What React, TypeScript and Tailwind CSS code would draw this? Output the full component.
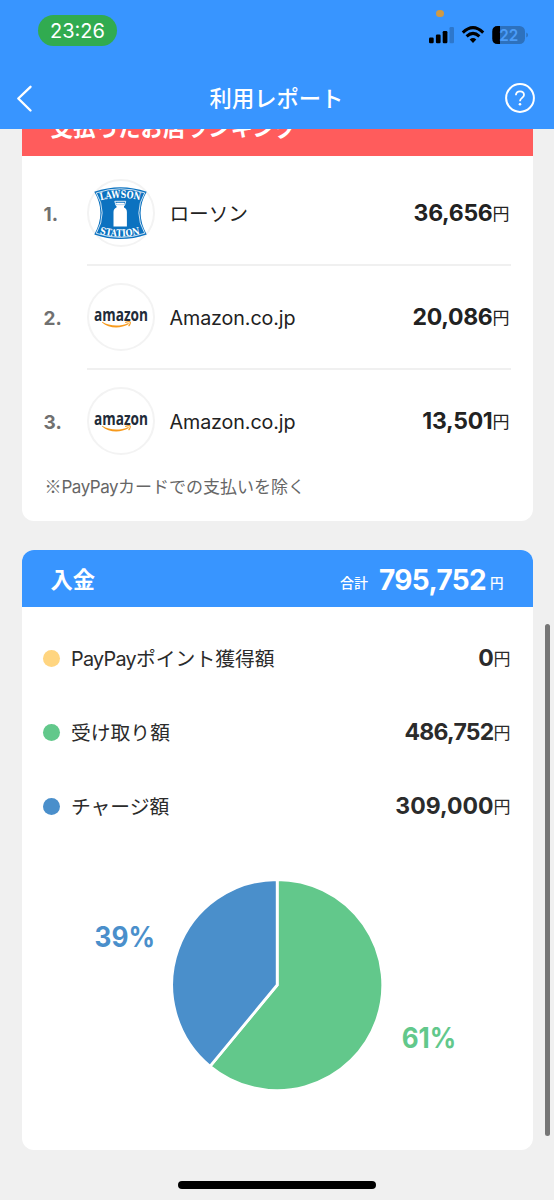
import type { ReactNode } from 'react';

type Shop = {
  rank: number;
  name: string;
  amount: number;
  logo: ReactNode;
};

type Deposit = {
  brand?: string;
  label: string;
  amount: number;
  dot: string;
  tracking: string;
};

const formatAmount = (value: number) => value.toLocaleString('en-US');

function LawsonLogo() {
  return (
    <svg className="shrink-0" width="68" height="68" viewBox="0 0 68 68">
      <path
        d="M7.300 12.800Q33.500 3.500 59.700 12.800Q47.500 33.500 59.700 55.500Q33.500 64.500 7.300 55.500Q19.500 33.500 7.300 12.800Z"
        fill="#0b72c0"
      />
      <path
        d="M9.300 13.900Q33.500 5.700 57.700 13.900Q46 33.500 57.700 54.300Q33.500 62.500 9.300 54.300Q21 33.500 9.300 13.900Z"
        fill="none"
        stroke="#fff"
        strokeWidth="0.8"
      />
      <path id="lawson-top" d="M13.500 21.400Q33.500 16.400 53.500 21.400" fill="none" />
      <path id="lawson-bottom" d="M12.500 54.600Q33.500 60.400 54.500 54.600" fill="none" />
      <g fill="#fff" fontFamily="'DejaVu Serif', serif" fontWeight="700">
        <text fontSize="10.300">
          <textPath href="#lawson-top" textLength="40" lengthAdjust="spacingAndGlyphs">
            LAWSON
          </textPath>
        </text>
        <text fontSize="9.800">
          <textPath href="#lawson-bottom" textLength="41" lengthAdjust="spacingAndGlyphs">
            STATION
          </textPath>
        </text>
      </g>
      <path d="M27.800 22.300L29 26.500H37.500L38.700 22.300Z" fill="none" stroke="#fff" strokeWidth="0.9" />
      <rect x="29" y="23.800" width="8.500" height="1.900" rx="0.900" fill="#fff" />
      <path d="M29.500 26.500H37V28.500C39 29.500 39.900 30.800 39.900 33V47.500H26.500V33C26.500 30.800 27.500 29.500 29.500 28.500Z" fill="#fff" />
    </svg>
  );
}

function AmazonLogo() {
  return (
    <svg className="shrink-0" width="68" height="68" viewBox="0 0 68 68">
      <text
        x="7"
        y="37.500"
        fill="#222b38"
        fontFamily="'Open Sans', sans-serif"
        fontWeight="700"
        fontSize="17.500"
        textLength="54"
        lengthAdjust="spacingAndGlyphs"
      >
        amazon
      </text>
      <path d="M15.300 38.800C22.500 43.400 33 43.800 41.300 39.900L42 41.100C33 46.300 22 45.600 15 39.500Z" fill="#f79a1c" />
      <path d="M38.200 39.400C41 38.300 43 38.500 43.200 39C43.600 39.900 42.700 41.900 41.600 43.200" fill="none" stroke="#f79a1c" strokeWidth="1.100" />
    </svg>
  );
}

const SHOPS: Shop[] = [
  { rank: 1, name: 'ローソン', amount: 36656, logo: <LawsonLogo /> },
  { rank: 2, name: 'Amazon.co.jp', amount: 20086, logo: <AmazonLogo /> },
  { rank: 3, name: 'Amazon.co.jp', amount: 13501, logo: <AmazonLogo /> },
];

const DEPOSITS: Deposit[] = [
  { brand: 'PayPay', label: 'ポイント獲得額', amount: 0, dot: 'bg-[#ffd580]', tracking: 'tracking-[-0.200px]' },
  { label: '受け取り額', amount: 486752, dot: 'bg-[#62c88b]', tracking: 'tracking-[-0.750px]' },
  { label: 'チャージ額', amount: 309000, dot: 'bg-[#4a8fcb]', tracking: 'tracking-normal' },
];

function StatusBar() {
  return (
    <div className="relative flex h-[66px] items-start justify-between pr-[26px] pl-[38px]">
      <span className="mt-[15px] flex h-[31px] w-[79px] items-center justify-center rounded-full bg-[#31ab50] text-[20px]">
        23:26
      </span>
      <span className="absolute top-[9.500px] left-[436px] size-[7.500px] rounded-full bg-[#cf9a45]" />
      <svg className="mt-[24px]" width="100" height="22" viewBox="0 0 100 22">
        <g fill="#000">
          <rect x="1" y="13.500" width="4.700" height="5.700" rx="1.200" />
          <rect x="7.900" y="10.500" width="4.700" height="8.700" rx="1.200" />
          <rect x="14.700" y="7" width="4.700" height="12.200" rx="1.200" />
          <rect x="21.500" y="3" width="4.500" height="16.200" rx="1.200" fill="#2d77cc" />
        </g>
        <g fill="none" stroke="#000" strokeWidth="3">
          <path d="M34.800 8.600Q45 -1.400 55.200 8.600" />
          <path d="M38.600 12.400Q45 6.400 51.400 12.400" />
        </g>
        <path d="M41.700 15.500Q45 12.700 48.300 15.500L45 19Z" fill="#000" />
        <rect x="64.300" y="2" width="32.700" height="18" rx="5.500" fill="#2d71bd" />
        <path d="M72 2H69.800Q64.300 2 64.300 7.500V14.500Q64.300 20 69.800 20H72Z" fill="#000" />
        <path d="M98.300 8.500Q100 9.300 100 11Q100 12.700 98.300 13.500Z" fill="#2d71bd" />
        <text x="71.300" y="16.700" fill="#4b9cf8" fontSize="15.800" fontWeight="600" textLength="19" lengthAdjust="spacingAndGlyphs">
          22
        </text>
      </svg>
    </div>
  );
}

function NavBar() {
  return (
    <div className="flex h-[63px] items-center justify-between pr-[19px] pl-4">
      <svg width="30" height="30" viewBox="0 0 30 30" fill="none" stroke="#fff" strokeWidth="2.400">
        <path d="M14.500 3.800L2.300 15.500L14.500 27.500" strokeLinejoin="round" strokeLinecap="round" />
      </svg>
      <h1 className="pt-0.5 pl-0.5 text-[22.300px] font-medium">利用レポート</h1>
      <svg width="30" height="30" viewBox="0 0 30 30" fill="none" stroke="#fff">
        <circle cx="15" cy="15" r="13.900" strokeWidth="2" />
        <path
          d="M10.900 12.200C11 9.600 12.700 8.300 15 8.300C17.300 8.300 19 9.800 19 11.900C19 14.800 15 15 15 18.200"
          strokeWidth="1.800"
        />
        <circle cx="15" cy="21.300" r="1.300" fill="#fff" stroke="none" />
      </svg>
    </div>
  );
}

function Amount({ value, tracking = 'tracking-[-0.300px]' }: { value: number; tracking?: string }) {
  return (
    <span className="ml-auto flex items-baseline leading-none">
      <span className={`text-[23px] font-bold ${tracking}`}>{formatAmount(value)}</span>
      <span className="relative -top-px text-[17px]">円</span>
    </span>
  );
}

function RankingCard() {
  return (
    <section className="-mt-[30px] h-[422px] overflow-hidden rounded-xl bg-white">
      <h2 className="flex h-[57px] items-center bg-[#ff5c5c] pl-[29px] text-[22.500px] font-bold text-white">
        支払ったお店ランキング
      </h2>
      <ol className="pt-[6px]">
        {SHOPS.map((shop) => (
          <li key={shop.rank} className="flex h-[104px] items-center pl-[22px]">
            <span className="w-[43px] pt-0.5 text-[19px] font-bold text-[#707070]">{shop.rank}.</span>
            <div
              className={`mr-[22px] flex h-full flex-1 items-center ${
                shop.rank < SHOPS.length ? 'border-b-2 border-[#f0f0f0]' : 'pb-0.5'
              }`}
            >
              <span className="flex size-[68px] items-center justify-center rounded-full border-2 border-[#f3f3f3]">
                {shop.logo}
              </span>
              <span className="ml-[15px] pt-[3px] text-[19.700px] tracking-[-0.100px] text-[#222]">{shop.name}</span>
              <span className="ml-auto pt-px pr-px text-[#222]">
                <Amount value={shop.amount} />
              </span>
            </div>
          </li>
        ))}
      </ol>
      <p className="pl-[23px] text-[17px] leading-6 text-[#666]">
        <span className="font-['Noto_Sans_CJK_JP',sans-serif]">※</span>
        <span className="tracking-[-0.500px]">PayPay</span>カードでの支払いを除く
      </p>
    </section>
  );
}

function DepositChart() {
  return (
    <svg width="511" height="240" viewBox="0 0 511 240">
      <g stroke="#fff" strokeWidth="2.800">
        <path d="M255.200 126V20.500A105.500 105.500 0 1 1 188 207.300Z" fill="#62c88b" />
        <path d="M255.200 126L188 207.300A105.500 105.500 0 0 1 255.200 20.500Z" fill="#4a8fcb" />
      </g>
      <g fontWeight="700" fontSize="28">
        <text x="72.500" y="87.500" fill="#4a8fcb" textLength="60.500" lengthAdjust="spacingAndGlyphs">
          39%
        </text>
        <text x="379.700" y="188.500" fill="#62c88b" textLength="54.500" lengthAdjust="spacingAndGlyphs">
          61%
        </text>
      </g>
    </svg>
  );
}

function DepositCard() {
  return (
    <section className="mt-[29px] h-[600px] overflow-hidden rounded-xl bg-white">
      <header className="flex h-[57px] items-center justify-between bg-[#3895ff] pr-[29px] pl-[29px] text-white">
        <h2 className="pt-0.5 text-[22.300px] font-bold">入金</h2>
        <div className="flex items-baseline pt-[3px] leading-none font-bold">
          <span className="relative -top-0.5 mr-[11px] text-[14px] font-medium">合計</span>
          <span className="text-[28px] tracking-[-0.650px]">795,752</span>
          <span className="relative -top-0.5 ml-1 text-[13.500px] font-medium">円</span>
        </div>
      </header>
      <ul className="pt-[14px]">
        {DEPOSITS.map((item) => (
          <li key={item.label} className="flex h-[74px] items-center pr-[22px] pl-[21px] text-[#2b2b2b]">
            <span className={`mr-[11.500px] size-[17px] rounded-full ${item.dot}`} />
            <span className="pt-[3px] text-[19.800px]">
              {item.brand && <span className="tracking-[-0.700px]">{item.brand}</span>}
              {item.label}
            </span>
            <Amount value={item.amount} tracking={item.tracking} />
          </li>
        ))}
      </ul>
      <div className="mt-4">
        <DepositChart />
      </div>
    </section>
  );
}

export default function App() {
  return (
    <div
      lang="ja"
      className="relative flex h-[1200px] w-[554px] flex-col overflow-hidden bg-[#f0f0f0] font-['Inter','Noto_Sans_CJK_JP',sans-serif]"
    >
      <header className="z-10 h-[129px] shrink-0 bg-[#3895ff] text-white">
        <StatusBar />
        <NavBar />
      </header>
      <main className="flex-1 overflow-hidden px-[21.500px]">
        <RankingCard />
        <DepositCard />
      </main>
      <div className="absolute top-[624px] right-[4px] h-[512px] w-[5px] rounded-full bg-[#767676]" />
      <div className="absolute bottom-[11px] left-[178px] h-[8px] w-[198px] rounded-full bg-black" />
    </div>
  );
}
